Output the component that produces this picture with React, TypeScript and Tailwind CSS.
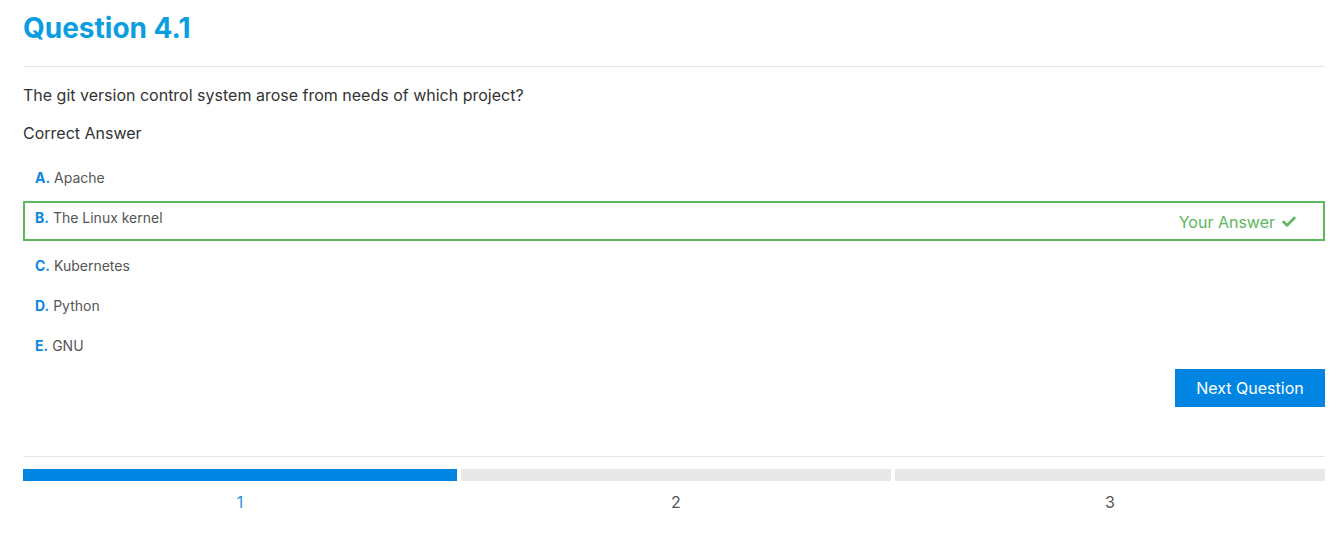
import { Check } from "lucide-react";

const options = [
  { letter: "A", text: "Apache" },
  { letter: "B", text: "The Linux kernel", selected: true },
  { letter: "C", text: "Kubernetes" },
  { letter: "D", text: "Python" },
  { letter: "E", text: "GNU" },
];

const steps = [
  { label: "1", active: true },
  { label: "2", active: false },
  { label: "3", active: false },
];

export default function App() {
  return (
    <div className="min-h-screen bg-white font-['Inter',sans-serif] px-[23px] pr-[13px] pt-[11px]">
      <h1 className="text-[28px] leading-[34px] font-bold text-[#0a9ee0]">Question 4.1</h1>
      <hr className="mt-[21px] border-0 h-px bg-[#e6e6e6]" />

      <p className="mt-4 text-base leading-6 text-[#333]">
        The git version control system arose from needs of which project?
      </p>
      <p className="mt-[14px] text-base leading-6 text-[#333]">Correct Answer</p>

      <div className="mt-[13px] flex flex-col">
        {options.map((opt) =>
          opt.selected ? (
            <div
              key={opt.letter}
              className="mt-[3px] mb-[5px] h-10 border-2 border-[#5cb85c] flex items-start justify-between pl-[10px] pr-[26px] pt-[5px]"
            >
              <span className="text-sm leading-5 text-[#555]">
                <span className="font-bold text-[#0a86e0]">{opt.letter}.</span> {opt.text}
              </span>
              <span className="flex items-center gap-[6px] text-base leading-6 text-[#5cb85c] mt-[2px]">
                Your Answer
                <Check size={16} strokeWidth={4} />
              </span>
            </div>
          ) : (
            <div key={opt.letter} className="h-10 flex items-center pl-3">
              <span className="text-sm leading-5 text-[#555]">
                <span className="font-bold text-[#0a86e0]">{opt.letter}.</span> {opt.text}
              </span>
            </div>
          )
        )}
      </div>

      <div className="mt-[3px] flex justify-end">
        <button className="w-[150px] h-[38px] bg-[#0085e3] text-white text-base">Next Question</button>
      </div>

      <hr className="mt-[49px] border-0 h-px bg-[#e6e6e6]" />

      <div className="mt-3 grid grid-cols-[434px_1fr_1fr] gap-1">
        {steps.map((s) => (
          <div key={s.label} className="flex flex-col items-center">
            <div className={`w-full h-3 ${s.active ? "bg-[#0085e3]" : "bg-[#e8e8e8]"}`} />
            <span className={`mt-[9px] text-base leading-6 ${s.active ? "text-[#2d8ee8]" : "text-[#555]"}`}>
              {s.label}
            </span>
          </div>
        ))}
      </div>
    </div>
  );
}
